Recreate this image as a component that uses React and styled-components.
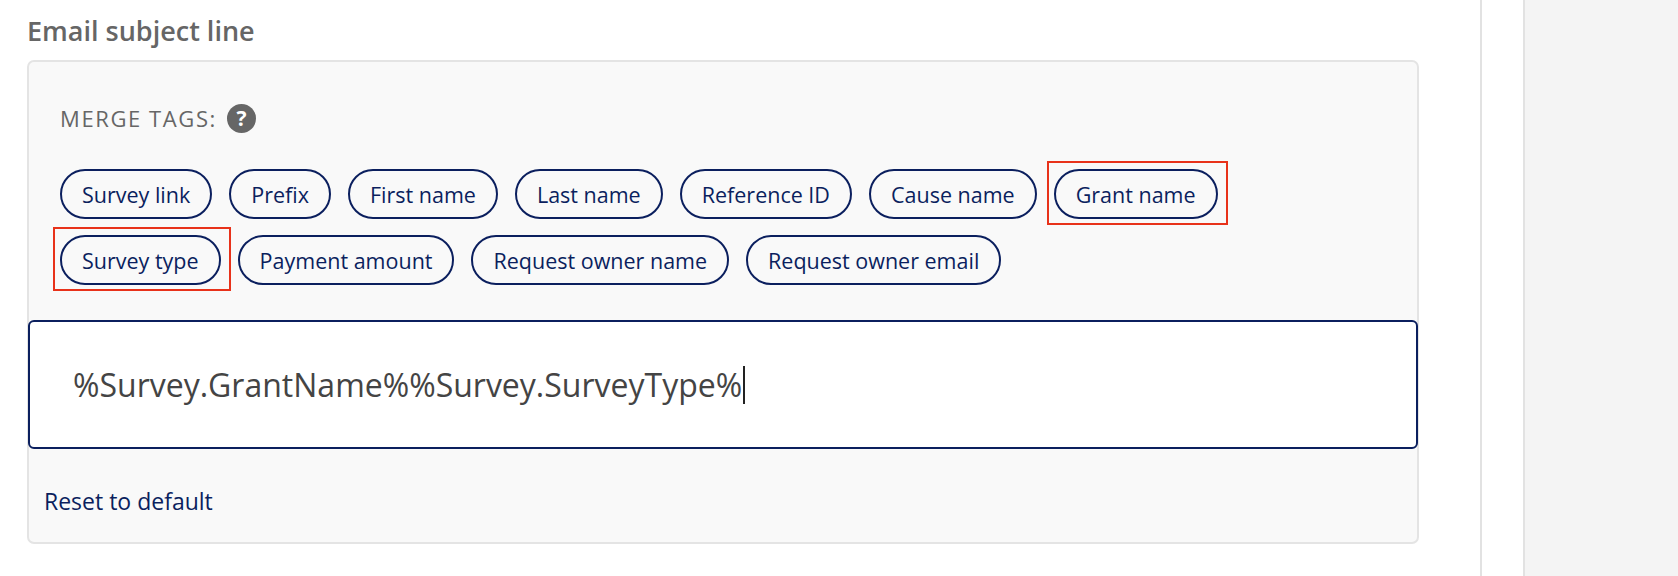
import styled, { createGlobalStyle } from 'styled-components'

const Global = createGlobalStyle`
  body { margin: 0; background: #fff; font-family: 'Open Sans', 'Liberation Sans', sans-serif; }
`

const Page = styled.div`
  display: flex;
  height: 576px;
  overflow: hidden;
`

const Main = styled.div`
  width: 1453px;
  padding-left: 27px;
  border-right: 2px solid #e2e2e2;
  flex-shrink: 0;
`

const Gap = styled.div`
  width: 41px;
  flex-shrink: 0;
`

const Side = styled.div`
  flex: 1;
  background: #f4f4f4;
  border-left: 2px solid #e2e2e2;
`

const Title = styled.h2`
  margin: 0;
  padding-top: 13px;
  font-size: 27px;
  line-height: 36px;
  font-weight: 600;
  color: #666;
`

const Card = styled.div`
  margin-top: 11px;
  width: 1392px;
  height: 484px;
  box-sizing: border-box;
  background: #f9f9f9;
  border: 2px solid #e4e4e4;
  border-radius: 7px;
  display: flex;
  flex-direction: column;
`

const Tags = styled.div`
  padding: 41px 32px 0 31px;
`

const Label = styled.div`
  display: flex;
  align-items: center;
  gap: 10px;
  font-size: 22px;
  line-height: 30px;
  color: #666;
  letter-spacing: 1.6px;
`

const Help = styled.span`
  width: 29px;
  height: 29px;
  border-radius: 50%;
  background: #666;
  color: #fff;
  font-weight: 700;
  font-size: 21px;
  letter-spacing: 0;
  display: inline-flex;
  align-items: center;
  justify-content: center;
`

const ChipList = styled.div`
  display: flex;
  flex-wrap: wrap;
  gap: 16px 17px;
  margin-top: 36px;
`

const Chip = styled.button`
  position: relative;
  height: 50px;
  padding: 0 20px;
  border: 2px solid #0b1f5e;
  border-radius: 25px;
  background: transparent;
  color: #0b1f5e;
  font-family: inherit;
  font-size: 21.5px;
  cursor: pointer;

  ${p => p.$marked && `
    &::after {
      content: '';
      position: absolute;
      left: -9px;
      right: -12px;
      top: -10px;
      bottom: -8px;
      border: 2.5px solid #e8321a;
    }
  `}
`

const Input = styled.div`
  margin: 35px -1px 0;
  height: 129px;
  box-sizing: border-box;
  background: #fff;
  border: 2px solid #0b1f5e;
  border-radius: 6px;
  display: flex;
  align-items: center;
  padding-left: 43px;
  font-size: 32px;
  color: #444;
`

const Caret = styled.span`
  display: inline-block;
  width: 1.5px;
  height: 38px;
  background: #222;
  margin-left: 1px;
`

const Reset = styled.a`
  margin: 36px 0 0 15px;
  font-size: 23px;
  color: #0b1f5e;
  cursor: pointer;
`

const tags = [
  ['Survey link'], ['Prefix'], ['First name'], ['Last name'], ['Reference ID'],
  ['Cause name'], ['Grant name', true], ['Survey type', true], ['Payment amount'],
  ['Request owner name'], ['Request owner email'],
]

export default function App() {
  return (
    <>
      <Global />
      <Page>
        <Main>
          <Title>Email subject line</Title>
          <Card>
            <Tags>
              <Label>MERGE TAGS: <Help>?</Help></Label>
              <ChipList>
                {tags.map(([t, m]) => <Chip key={t} $marked={m}>{t}</Chip>)}
              </ChipList>
            </Tags>
            <Input>%Survey.GrantName%%Survey.SurveyType%<Caret /></Input>
            <Reset>Reset to default</Reset>
          </Card>
        </Main>
        <Gap />
        <Side />
      </Page>
    </>
  )
}
